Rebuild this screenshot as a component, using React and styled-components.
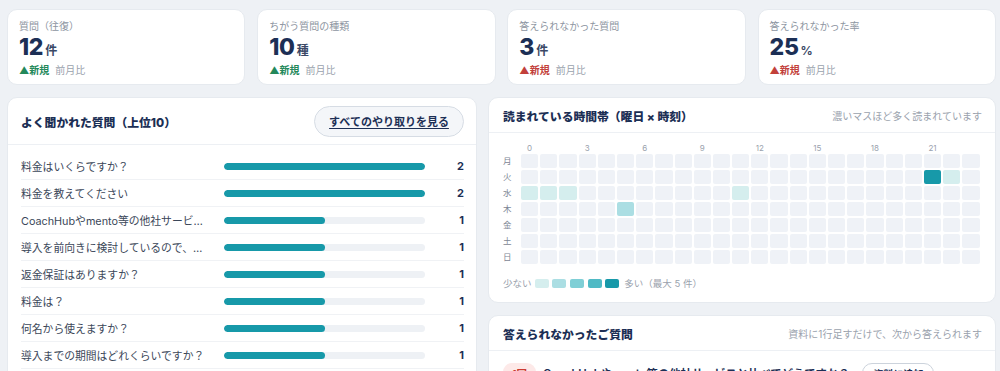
import React from 'react';
import styled, { createGlobalStyle } from 'styled-components';

const GlobalStyle = createGlobalStyle`
  body {
    margin: 0;
    background: #eef1f5;
    font-family: "Inter", "Noto Sans CJK JP", sans-serif;
    color: #1e2f4f;
  }
`;

const NAVY = '#1c2f55';
const TEAL = '#1799a9';
const LEVELS = ['#eff2f7', '#d5eeee', '#abdee3', '#7fcfd6', '#4fbac5', '#1799a9'];

const Page = styled.div`
  padding: 9px 4px 0 7px;
`;

// KPI cards
const KpiGrid = styled.div`
  display: grid;
  grid-template-columns: repeat(4, 1fr);
  gap: 11.7px;
`;

const KpiCard = styled.div`
  background: #fff;
  border: 1px solid #e6eaef;
  border-radius: 10px;
  padding: 9px 11px 9px 11px;
  height: 76px;
  box-sizing: border-box;
`;

const KpiLabel = styled.div`
  font-size: 10px;
  line-height: 14px;
  color: #8d95a1;
`;

const KpiValue = styled.div`
  display: flex;
  align-items: baseline;
  height: 28px;
  line-height: 28px;
  font-size: 23px;
  font-weight: 800;
  color: ${NAVY};
  letter-spacing: -0.3px;
`;

const Unit = styled.span`
  font-size: 12px;
  font-weight: 700;
  color: #3a4866;
  margin-left: 2px;
`;

const TrendLine = styled.div`
  margin-top: 2px;
  font-size: 10px;
  line-height: 14px;
  display: flex;
  gap: 6px;
`;

const Trend = styled.span`
  font-weight: 600;
  color: ${p => (p.$bad ? '#c2403a' : '#23885a')};
`;

const TrendNote = styled.span`
  color: #9aa2ad;
`;

// panels
const Columns = styled.div`
  display: grid;
  grid-template-columns: 470px 1fr;
  gap: 11px;
  margin-top: 12px;
  align-items: start;
`;

const Stack = styled.div`
  display: flex;
  flex-direction: column;
  gap: 12px;
`;

const Panel = styled.section`
  background: #fff;
  border: 1px solid #e6eaef;
  border-radius: 10px;
  overflow: hidden;
`;

const PanelHeader = styled.div`
  display: flex;
  align-items: center;
  justify-content: space-between;
  height: ${p => (p.$tall ? 46 : 34)}px;
  padding: 0 ${p => (p.$tall ? 12 : 13)}px 0 ${p => (p.$tall ? 13 : 14)}px;
  border-bottom: 1px solid #edf0f4;
`;

const PanelTitle = styled.h2`
  margin: 0;
  font-size: 11.8px;
  font-weight: 800;
  color: ${NAVY};
`;

const PanelNote = styled.span`
  font-size: 10px;
  color: #9aa2ad;
`;

const GhostButton = styled.button`
  width: 150px;
  height: 31px;
  border: 1px solid #d6dce4;
  border-radius: 16px;
  background: #f4f6f9;
  font-family: inherit;
  font-size: 11px;
  font-weight: 700;
  color: ${NAVY};
  text-decoration: underline;
  text-underline-offset: 2px;
  cursor: pointer;
`;

// top questions
const QList = styled.div`
  padding: 8px 12px 6px 13px;
`;

const QRow = styled.div`
  display: grid;
  grid-template-columns: 203px 201px 1fr;
  align-items: center;
  height: 27px;
  box-sizing: border-box;
  border-bottom: 1px solid #f0f2f5;
`;

const QText = styled.div`
  font-size: 10.8px;
  color: #3b4759;
  white-space: nowrap;
  overflow: hidden;
  text-overflow: ellipsis;
  padding-right: 11px;
`;

const Track = styled.div`
  height: 7px;
  border-radius: 4px;
  background: #eef1f5;
  overflow: hidden;
`;

const Fill = styled.div`
  height: 100%;
  border-radius: 4px;
  background: ${TEAL};
`;

const Count = styled.div`
  text-align: right;
  font-size: 11px;
  font-weight: 700;
  color: ${NAVY};
`;

// heatmap
const HeatBody = styled.div`
  padding: 10px 14px 13px 14px;
`;

const HourRow = styled.div`
  display: grid;
  grid-template-columns: 16px repeat(24, 17.2px);
  column-gap: 2px;
  height: 10px;
  margin-bottom: 1px;
`;

const HourLabel = styled.span`
  font-size: 8px;
  line-height: 10px;
  color: #9aa2ad;
  text-align: center;
`;

const HeatGrid = styled.div`
  display: grid;
  grid-template-columns: 16px repeat(24, 17.2px);
  grid-auto-rows: 14px;
  gap: 2px;
`;

const DayLabel = styled.span`
  font-size: 8.5px;
  line-height: 14px;
  color: #7d8694;
`;

const Cell = styled.div`
  border-radius: 2px;
  background: ${p => LEVELS[p.$level]};
`;

const Legend = styled.div`
  display: flex;
  align-items: center;
  margin-top: 13px;
  height: 12px;
  font-size: 9.5px;
  color: #9aa2ad;
`;

const Swatches = styled.div`
  display: flex;
  gap: 3.7px;
  margin: 0 5px 0 3px;
`;

const Swatch = styled.span`
  width: 14px;
  height: 9px;
  border-radius: 2px;
  background: ${p => LEVELS[p.$level]};
`;

// unanswered
const MissList = styled.div`
  padding: 12px 14px;
`;

const MissRow = styled.div`
  display: flex;
  align-items: center;
  gap: 7px;
  height: 20px;
  margin-bottom: 8px;
`;

const Badge = styled.span`
  padding: 3px 9px;
  border-radius: 9px;
  background: #fde9e8;
  color: #cc3b33;
  font-size: 10.5px;
  font-weight: 700;
`;

const MissText = styled.span`
  font-size: 11.3px;
  font-weight: 600;
  color: ${NAVY};
`;

const PillButton = styled.button`
  margin-left: 6px;
  padding: 2px 10px;
  border: 1px solid #ccd3dc;
  border-radius: 10px;
  background: #fff;
  font-family: inherit;
  font-size: 10px;
  font-weight: 700;
  color: ${NAVY};
`;

const kpis = [
  { label: '質問（往復）', value: '12', unit: '件', bad: false },
  { label: 'ちがう質問の種類', value: '10', unit: '種', bad: false },
  { label: '答えられなかった質問', value: '3', unit: '件', bad: true },
  { label: '答えられなかった率', value: '25', unit: '%', bad: true },
];

const questions = [
  ['料金はいくらですか？', 2],
  ['料金を教えてください', 2],
  ['CoachHubやmento等の他社サービスと比べてどうですか？', 1],
  ['導入を前向きに検討しているので、見積もりをいただけますか？', 1],
  ['返金保証はありますか？', 1],
  ['料金は？', 1],
  ['何名から使えますか？', 1],
  ['導入までの期間はどれくらいですか？', 1],
  ['無料トライアルはありますか？', 1],
  ['解約はいつでもできますか？', 1],
];

const days = ['月', '火', '水', '木', '金', '土', '日'];
const heat = { '1-21': 5, '1-22': 1, '2-0': 1, '2-1': 1, '2-2': 1, '2-11': 1, '3-5': 2 };

const misses = [
  ['1回', 'CoachHubやmento等の他社サービスと比べてどうですか？'],
  ['1回', '導入事例を教えてください'],
  ['1回', 'セキュリティ対策はどうなっていますか？'],
];

export default function App() {
  const max = Math.max(...questions.map(q => q[1]));
  return (
    <Page>
      <GlobalStyle />
      <KpiGrid>
        {kpis.map(k => (
          <KpiCard key={k.label}>
            <KpiLabel>{k.label}</KpiLabel>
            <KpiValue>
              {k.value}
              <Unit>{k.unit}</Unit>
            </KpiValue>
            <TrendLine>
              <Trend $bad={k.bad}>▲新規</Trend>
              <TrendNote>前月比</TrendNote>
            </TrendLine>
          </KpiCard>
        ))}
      </KpiGrid>

      <Columns>
        <Panel>
          <PanelHeader $tall>
            <PanelTitle>よく聞かれた質問（上位10）</PanelTitle>
            <GhostButton>すべてのやり取りを見る</GhostButton>
          </PanelHeader>
          <QList>
            {questions.map(([text, n], i) => (
              <QRow key={i}>
                <QText>{text}</QText>
                <Track>
                  <Fill style={{ width: `${(n / max) * 100}%` }} />
                </Track>
                <Count>{n}</Count>
              </QRow>
            ))}
          </QList>
        </Panel>

        <Stack>
          <Panel>
            <PanelHeader>
              <PanelTitle>読まれている時間帯（曜日 × 時刻）</PanelTitle>
              <PanelNote>濃いマスほど多く読まれています</PanelNote>
            </PanelHeader>
            <HeatBody>
              <HourRow>
                <span />
                {Array.from({ length: 24 }, (_, h) => (
                  <HourLabel key={h}>{h % 3 === 0 ? h : ''}</HourLabel>
                ))}
              </HourRow>
              <HeatGrid>
                {days.map((d, di) => (
                  <React.Fragment key={d}>
                    <DayLabel>{d}</DayLabel>
                    {Array.from({ length: 24 }, (_, h) => (
                      <Cell key={h} $level={heat[`${di}-${h}`] || 0} />
                    ))}
                  </React.Fragment>
                ))}
              </HeatGrid>
              <Legend>
                少ない
                <Swatches>
                  {[1, 2, 3, 4, 5].map(l => <Swatch key={l} $level={l} />)}
                </Swatches>
                多い（最大 5 件）
              </Legend>
            </HeatBody>
          </Panel>

          <Panel>
            <PanelHeader>
              <PanelTitle>答えられなかったご質問</PanelTitle>
              <PanelNote>資料に1行足すだけで、次から答えられます</PanelNote>
            </PanelHeader>
            <MissList>
              {misses.map(([c, t], i) => (
                <MissRow key={i}>
                  <Badge>{c}</Badge>
                  <MissText>{t}</MissText>
                  <PillButton>資料に追加</PillButton>
                </MissRow>
              ))}
            </MissList>
          </Panel>
        </Stack>
      </Columns>
    </Page>
  );
}
